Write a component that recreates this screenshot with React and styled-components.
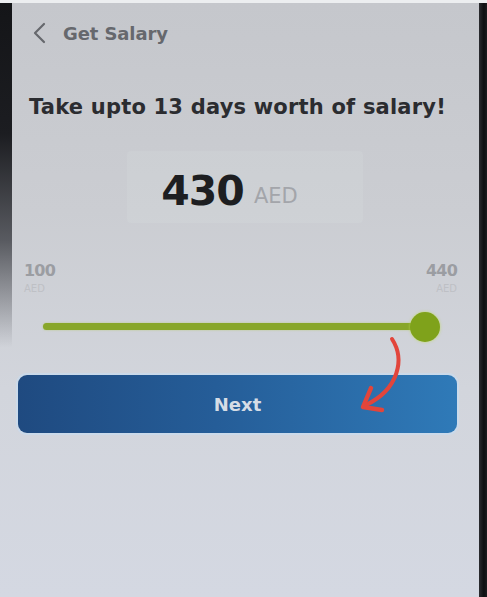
import React, { useState } from "react";
import styled, { createGlobalStyle } from "styled-components";

// page reset, the phone photo fills the whole window
const GlobalStyle = createGlobalStyle`
  html, body {
    margin: 0;
    padding: 0;
    background: #c6c8cd;
  }
  body {
    font-family: "DejaVu Sans", "Open Sans", sans-serif;
  }
`;

// phone frame : dark bezel on both sides, screen in the middle
const PHONE = styled.div`
  width: 487px;
  height: 597px;
  display: flex;
  border-top: 3px solid #eceef0;
  box-sizing: border-box;
  overflow: hidden;
  background: linear-gradient(180deg, #c5c7cc 0%, #cbcdd2 35%, #d2d5dc 65%, #d4d8e2 100%);
`;

const BEZEL = styled.div`
  width: ${props => props.size}px;
  flex-shrink: 0;
  background: ${props =>
    props.fade
      ? "linear-gradient(180deg, #141518 0%, #1c1d21 22%, rgba(60,62,68,0.8) 40%, rgba(200,202,208,0) 58%)"
      : "linear-gradient(90deg, #2a2b2f 0%, #0e0f11 60%, #1b1c1f 100%)"};
`;

const SCREEN = styled.div`
  flex: 1;
  display: flex;
  flex-direction: column;
  padding: 0 22px 0 6px;
`;

// top navigation : back arrow + page title
const HEADER = styled.div`
  display: flex;
  align-items: center;
  gap: 17px;
  height: 22px;
  margin-top: 19px;
  padding-left: 15px;
  color: #66686d;

  span {
    font-size: 18px;
    font-weight: 600;
    letter-spacing: -0.1px;
  }
`;

const TITLE = styled.h1`
  margin: 51px 0 0;
  text-align: center;
  font-size: 21px;
  font-weight: 700;
  letter-spacing: 0.2px;
  color: #2b2c30;
`;

// selected amount box
const AMOUNTBOX = styled.div`
  align-self: center;
  margin: 32px 0 0 14px;
  width: 236px;
  height: 72px;
  box-sizing: border-box;
  padding: 8px 30px 0 0;
  display: flex;
  align-items: center;
  justify-content: center;
  gap: 10px;
  border-radius: 4px;
  background: rgba(225, 228, 232, 0.16);

  .value {
    font-size: 41px;
    font-weight: 700;
    color: #1d1e21;
    letter-spacing: -1px;
  }

  .unit {
    margin-top: 10px;
    font-size: 21px;
    color: #a3a5aa;
  }
`;

const RANGELABELS = styled.div`
  display: flex;
  justify-content: space-between;
  margin-top: 38px;
  padding-left: 6px;
`;

const RANGEITEM = styled.div`
  display: flex;
  flex-direction: column;
  align-items: ${props => (props.end ? "flex-end" : "flex-start")};
  color: #9b9da2;

  b {
    font-size: 16px;
    font-weight: 600;
    letter-spacing: -0.8px;
  }

  small {
    margin-top: 3px;
    font-size: 10px;
    color: #bec0c5;
  }
`;

// slider area and next button, the hint arrow lies over both
const ACTIONAREA = styled.div`
  position: relative;
  display: flex;
  flex-direction: column;
`;

const TRACK = styled.div`
  position: relative;
  margin: 29px 32px 0 25px;
  height: 7px;
  border-radius: 4px;
  background: #88a62a;
  box-shadow: 0 0 2px rgba(170, 200, 60, 0.6);
`;

const THUMB = styled.div`
  position: absolute;
  top: 50%;
  width: 30px;
  height: 30px;
  border-radius: 50%;
  background: #7fa21b;
  box-shadow: 0 0 3px rgba(190, 220, 80, 0.8);
  transform: translate(-50%, -50%);
`;

const NEXTBUTTON = styled.button`
  margin-top: 45px;
  height: 58px;
  border: none;
  border-radius: 9px;
  background: linear-gradient(90deg, #1f4a80 0%, #255d98 45%, #2f7ab8 100%);
  box-shadow: 0 0 0 2px rgba(200, 220, 240, 0.7);
  color: #d6dde6;
  font-family: inherit;
  font-size: 18px;
  font-weight: 700;
  cursor: pointer;
`;

const HINT = styled.svg`
  position: absolute;
  left: 337px;
  top: 40px;
`;

const ChevronLeft = () => (
  <svg width="13" height="22" viewBox="0 0 13 22">
    <path
      d="M11 2 L2 11 L11 20"
      fill="none"
      stroke="#66686d"
      strokeWidth="2.2"
      strokeLinecap="round"
      strokeLinejoin="round"
    />
  </svg>
);

const App = () => {
  const min = 100;
  const max = 440;
  const [amount] = useState(430);
  const percent = ((amount - min) / (max - min)) * 100;

  return (
    <>
      <GlobalStyle />
      <PHONE>
        <BEZEL size={12} fade />
        <SCREEN>
          <HEADER>
            <ChevronLeft />
            <span>Get Salary</span>
          </HEADER>
          <TITLE>Take upto 13 days worth of salary!</TITLE>
          <AMOUNTBOX>
            <span className="value">{amount}</span>
            <span className="unit">AED</span>
          </AMOUNTBOX>
          <RANGELABELS>
            <RANGEITEM>
              <b>{min}</b>
              <small>AED</small>
            </RANGEITEM>
            <RANGEITEM end>
              <b>{max}</b>
              <small>AED</small>
            </RANGEITEM>
          </RANGELABELS>
          <ACTIONAREA>
            <TRACK>
              <THUMB style={{ left: `${percent + 3}%` }} />
            </TRACK>
            <NEXTBUTTON>Next</NEXTBUTTON>
            <HINT width="50" height="82" viewBox="0 0 50 82">
              <path
                d="M37 5 C50 25, 44 55, 11 71"
                fill="none"
                stroke="#e2453b"
                strokeWidth="4"
                strokeLinecap="round"
              />
              <path
                d="M16 54 L8 73 L27 76"
                fill="none"
                stroke="#e2453b"
                strokeWidth="4.5"
                strokeLinecap="round"
                strokeLinejoin="round"
              />
            </HINT>
          </ACTIONAREA>
        </SCREEN>
        <BEZEL size={8} />
      </PHONE>
    </>
  );
};

export default App;
